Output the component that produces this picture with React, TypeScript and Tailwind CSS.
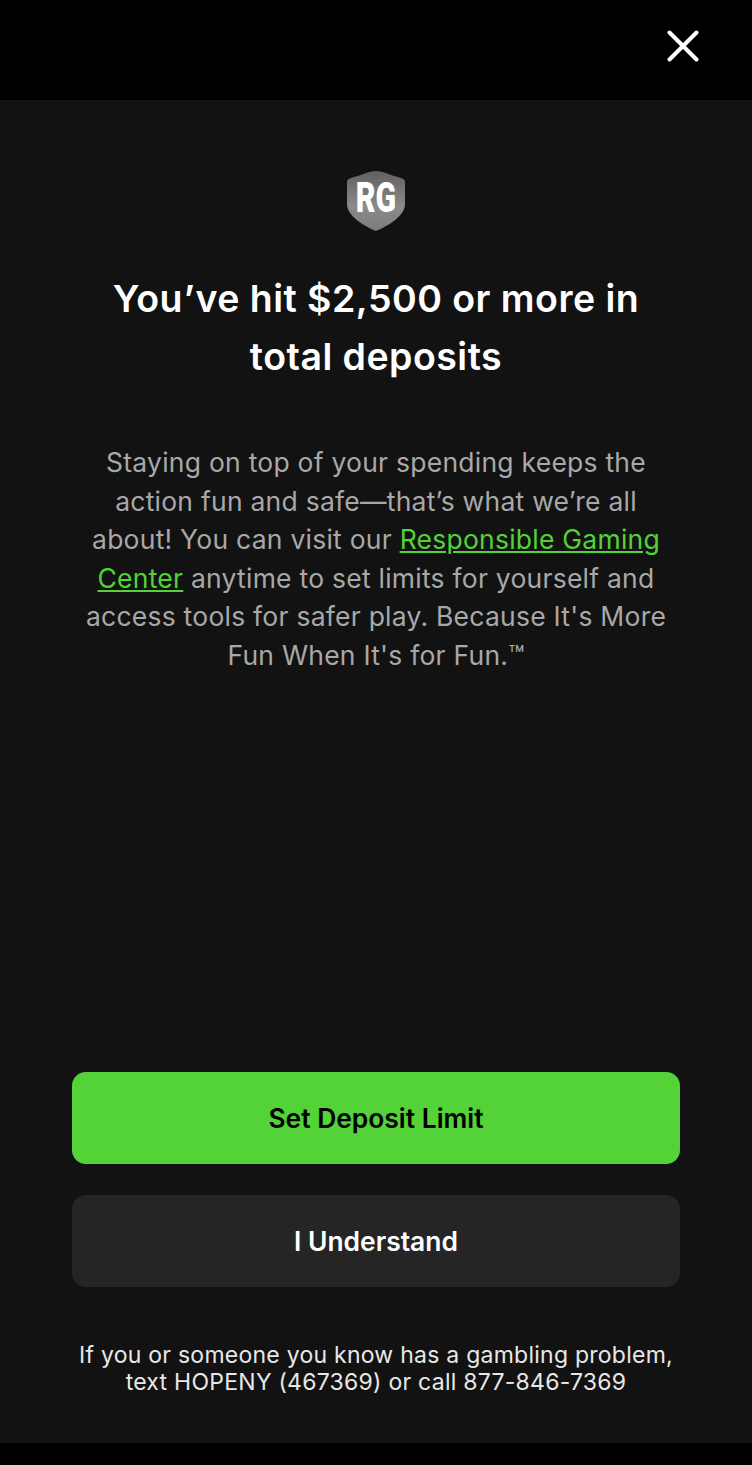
export default function App() {
  return (
    <div className="flex h-[1465px] w-[752px] flex-col overflow-hidden bg-black font-['Inter',sans-serif]">
      <header className="flex h-[100px] shrink-0 justify-end pr-[53px] pt-[30px]">
        <svg width="32" height="32" viewBox="0 0 32 32" fill="none" stroke="#fff" strokeWidth="4" strokeLinecap="round">
          <path d="M2.5 2.5 29.5 29.5M29.5 2.5 2.5 29.5" />
        </svg>
      </header>
      <main className="flex h-[1343px] shrink-0 flex-col items-center bg-[#121212] px-[72px] pt-[70px]">
        <div className="relative h-[62px] w-[60px]">
          <svg width="60" height="62" viewBox="0 0 60 62">
            <defs>
              <linearGradient id="shield" x1="0" y1="0" x2="0" y2="1">
                <stop offset="0" stopColor="#606060" />
                <stop offset="0.6" stopColor="#8a8a8a" />
                <stop offset="1" stopColor="#7c7c7c" />
              </linearGradient>
            </defs>
            <path d="M30 1C37 1 44 5 55 8C58 9 59 10 59 12V34C59 46 42 56 30 61C18 56 1 46 1 34V12C1 10 2 9 5 8C16 5 23 1 30 1Z" fill="url(#shield)" />
          </svg>
          <span className="absolute inset-x-0 top-[3px] scale-x-[0.72] text-center font-['Roboto',sans-serif] text-[42px] leading-[50px] font-black text-white">RG</span>
        </div>
        <h1 className="mt-[38px] w-[640px] text-center text-[37.5px] leading-[58px] font-semibold tracking-[0.47px] text-white">
          You’ve hit $2,500 or more in
          <br />
          total deposits
        </h1>
        <p className="mt-[57px] w-[640px] text-center text-[26.5px] leading-[38.5px] tracking-[0.24px] text-[#a8a8a8]">
          Staying on top of your spending keeps the
          <br />
          action fun and safe—that’s what we’re all
          <br />
          about! You can visit our <a className="text-[#53d337] underline">Responsible Gaming</a>
          <br />
          <a className="text-[#53d337] underline">Center</a> anytime to set limits for yourself and
          <br />
          access tools for safer play. Because It's More
          <br />
          Fun When It's for Fun.™
        </p>
        <div className="mt-auto flex w-[608px] flex-col gap-[31px]">
          <button className="h-[92px] rounded-[14px] bg-[#53d337] pt-[1px] text-[26.4px] font-semibold text-black">Set Deposit Limit</button>
          <button className="h-[92px] rounded-[14px] bg-[#252525] pt-[1px] text-[26.4px] font-semibold text-white">I Understand</button>
        </div>
        <p className="mt-[55px] mb-[47px] w-[640px] text-center text-[23px] leading-[27px] tracking-[0.25px] text-[#e8e8e8]">
          If you or someone you know has a gambling problem,
          <br />
          text HOPENY (467369) or call 877-846-7369
        </p>
      </main>
      <div className="grow bg-black" />
    </div>
  );
}
